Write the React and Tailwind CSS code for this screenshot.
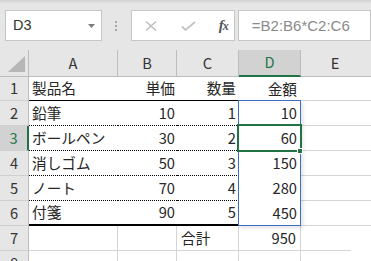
import React from 'react';

const rows = [
  ['製品名', '単価', '数量', '金額'],
  ['鉛筆', '10', '1', '10'],
  ['ボールペン', '30', '2', '60'],
  ['消しゴム', '50', '3', '150'],
  ['ノート', '70', '4', '280'],
  ['付箋', '90', '5', '450'],
];

const widths = ['w-[89px]', 'w-[59px]', 'w-[62px]', 'w-[62px]'];
const letters = ['A', 'B', 'C', 'D'];

function RowHead({ n, selected, h }) {
  return (
    <div
      className={`w-[29px] shrink-0 ${h} flex items-center justify-center border-b border-[#cfcfcf] ${
        selected
          ? 'bg-[#d2d2d2] text-[#217346] border-r-2 border-r-[#217346]'
          : 'bg-[#e6e6e6] text-[#333] border-r border-r-[#bdbdbd]'
      }`}
    >
      {n}
    </div>
  );
}

function FormulaBar() {
  return (
    <div className="relative h-[50px] bg-[#e6e6e6] flex items-start pt-[10px]">
      <div className="absolute top-0 left-0 right-0 h-[4px] bg-gradient-to-b from-[#d2d2d2] to-[#e6e6e6]" />
      <div className="ml-[5px] w-[102px] h-[31px] bg-white border border-[#c6c6c6] flex items-center justify-between pl-[7px] pr-[6px]">
        <span className="font-['Liberation_Sans',sans-serif] text-[14.5px] text-[#333]">D3</span>
        <svg width="7" height="4" viewBox="0 0 7 4"><path d="M0 0h7L3.5 4z" fill="#7a7a7a" /></svg>
      </div>
      <div className="w-[30px] h-[31px] flex flex-col items-center justify-center gap-[2px]">
        <div className="w-[2px] h-[2px] bg-[#a6a6a6]" />
        <div className="w-[2px] h-[2px] bg-[#a6a6a6]" />
        <div className="w-[2px] h-[2px] bg-[#a6a6a6]" />
      </div>
      <div className="w-[110px] h-[31px] bg-white border border-[#c6c6c6] flex items-center">
        <svg className="ml-[13px]" width="12" height="12" viewBox="0 0 12 12">
          <path d="M1 1.5l10 9M11 1.5l-10 9" stroke="#bcbcbc" strokeWidth="1.4" />
        </svg>
        <svg className="ml-[24px]" width="15" height="10" viewBox="0 0 15 10">
          <path d="M1 5.5l3.5 3.5L14 1" stroke="#c4c4c4" strokeWidth="1.8" fill="none" />
        </svg>
        <span className="ml-[23px] font-['Liberation_Serif',serif] italic font-bold text-[15px] text-[#555] tracking-[-1px]">
          f<span className="text-[12px]">x</span>
        </span>
      </div>
      <div className="ml-[3px] w-[140px] h-[31px] bg-white border border-[#c6c6c6] flex items-center pl-[13px]">
        <span className="font-['Liberation_Sans',sans-serif] text-[15px] text-[#8a8a8a]">=B2:B6*C2:C6</span>
      </div>
    </div>
  );
}

export default function App() {
  return (
    <div className="relative w-[371px] h-[261px] overflow-hidden bg-white font-['Noto_Sans_CJK_JP',sans-serif] text-[14.67px] leading-none text-[#262626]">
      <FormulaBar />

      {/* column headers */}
      <div className="flex h-[27px] bg-[#e6e6e6] text-[#333]">
        <div className="w-[29px] shrink-0 border-r border-b border-[#bdbdbd] flex items-end justify-end pr-[3px] pb-[4px]">
          <svg width="17" height="16" viewBox="0 0 17 16"><path d="M17 0V16H0z" fill="#b7b7b7" /></svg>
        </div>
        {letters.map((l, i) => (
          <div
            key={l}
            className={`${widths[i]} shrink-0 flex items-center justify-center ${
              l === 'D'
                ? 'bg-[#d2d2d2] text-[#217346] border-r border-r-[#bdbdbd] border-b-2 border-b-[#217346]'
                : 'border-r border-b border-[#bdbdbd]'
            }`}
          >
            {l}
          </div>
        ))}
        <div className="flex-1 flex items-center justify-center border-b border-[#bdbdbd] pr-[2px]">E</div>
      </div>

      {/* data rows */}
      {rows.map((r, i) => {
        const h = i === 0 ? 'h-[24px]' : 'h-[25px]';
        const line =
          i === 0
            ? 'border-b border-black'
            : i === 5
            ? 'border-b-2 border-black'
            : 'border-b border-dotted border-black';
        return (
          <div key={i} className="flex">
            <RowHead n={i + 1} selected={i === 2} h={h} />
            <div className={`${widths[0]} ${h} shrink-0 flex items-center pl-[3px] ${line}`}>{r[0]}</div>
            <div className={`${widths[1]} ${h} shrink-0 flex items-center justify-end pr-[2px] ${line}`}>{r[1]}</div>
            <div className={`${widths[2]} ${h} shrink-0 flex items-center justify-end pr-[3px] ${line}`}>{r[2]}</div>
            <div className={`${widths[3]} ${h} shrink-0 flex items-center justify-end pr-[4px]`}>{r[3]}</div>
            <div className={`flex-1 ${h} border-b border-[#d4d4d4]`} />
          </div>
        );
      })}

      {/* total row */}
      <div className="flex">
        <RowHead n={7} h="h-[25px]" />
        <div className="w-[89px] h-[25px] shrink-0 border-r border-b border-[#d4d4d4]" />
        <div className="w-[59px] h-[25px] shrink-0 border-r border-b border-[#d4d4d4]" />
        <div className="w-[62px] h-[25px] shrink-0 border-r border-b border-[#d4d4d4] flex items-center pl-[4px]">合計</div>
        <div className="w-[62px] h-[25px] shrink-0 border-r border-b border-[#d4d4d4] flex items-center justify-end pr-[4px]">950</div>
        <div className="flex-1 h-[25px] flex items-end">
          <div className="w-[50px] border-b border-[#d4d4d4]" />
        </div>
      </div>

      <div className="flex">
        <RowHead n={8} h="h-[25px]" />
        <div className="w-[89px] h-[25px] shrink-0 border-r border-[#d4d4d4]" />
        <div className="w-[59px] h-[25px] shrink-0 border-r border-[#d4d4d4]" />
        <div className="w-[62px] h-[25px] shrink-0 border-r border-[#d4d4d4]" />
        <div className="w-[62px] h-[25px] shrink-0 border-r border-[#d4d4d4]" />
      </div>

      {/* spill range outline */}
      <div className="absolute left-[238px] top-[100px] w-[63px] h-[126px] border border-[#3b6fc6] shadow-[2px_2px_4px_rgba(0,0,0,0.12)]" />
      {/* active cell */}
      <div className="absolute left-[237px] top-[124px] w-[65px] h-[28px] border-2 border-[#217346]" />
      <div className="absolute left-[297px] top-[148px] w-[6px] h-[6px] bg-[#217346] border border-white" />
    </div>
  );
}
